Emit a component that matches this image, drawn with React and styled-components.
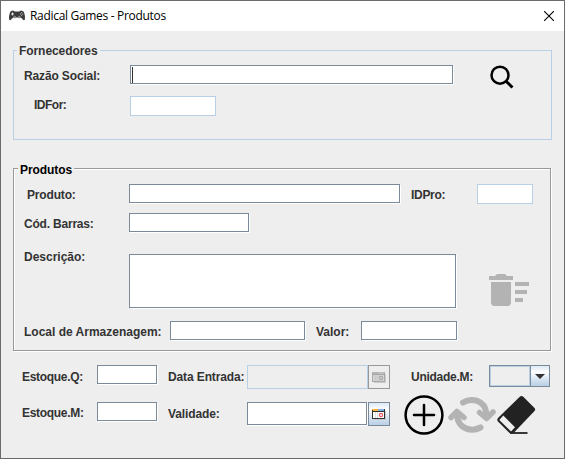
import React from "react";
import styled, { createGlobalStyle } from "styled-components";

const Global = createGlobalStyle`
  * { box-sizing: border-box; }
  body { margin: 0; background: #eeeeee; }
`;
const Window = styled.main`
  width: 565px;
  height: 459px;
  border: 1px solid #6b6b6b;
  background: #eeeeee;
  color: #333333;
  font: bold 12px/14px "Liberation Sans", Arial, sans-serif;
  overflow: hidden;
`;
const TitleBar = styled.header`
  display: flex;
  align-items: center;
  height: 30px;
  padding: 0 10px 0 7px;
  background: #ffffff;
  color: #000000;
`;
const Title = styled.h1`
  flex: 1;
  margin: 0 0 0 4px;
  font: 12px/16px "Open Sans", "Noto Sans", sans-serif;
  letter-spacing: -0.31px;
`;
const Icon = styled.svg`
  display: block;
  flex: none;
  margin: ${(p) => p.$top || 0}px 0 0 ${(p) => p.$gap || 0}px;
`;
const Body = styled.form`
  display: flex;
  flex-direction: column;
  padding: 12px 12px 0;
`;
const Panel = styled.section`
  display: flex;
  flex-direction: column;
  width: 539px;
  height: 90px;
  margin-top: 7px;
  border: 1px solid #b8cfe5;
`;
const EtchedPanel = styled(Panel)`
  width: 538px;
  height: 183px;
  margin-top: 28px;
  border-color: #999999;
  box-shadow: 1px 1px 0 #ffffff, inset 1px 1px 0 #ffffff;
`;
const Legend = styled.h2`
  align-self: flex-start;
  height: 14px;
  margin: -7px 0 0 ${(p) => p.$inset}px;
  padding: ${(p) => p.$drop || 0}px 2px 0;
  background: #eeeeee;
  color: ${(p) => p.$color};
  font: inherit;
  white-space: nowrap;
  letter-spacing: -0.07px;
`;
const Row = styled.div`
  display: flex;
  align-items: flex-start;
  height: ${(p) => p.$height}px;
`;
const Label = styled.label`
  flex: none;
  width: ${(p) => p.$width}px;
  margin: ${(p) => p.$top || 0}px 0 0 ${(p) => p.$gap || 0}px;
  white-space: nowrap;
  letter-spacing: ${(p) => p.$spacing || 0}px;
`;
const Field = styled.div`
  flex: none;
  width: ${(p) => p.$width}px;
  height: ${(p) => p.$height || 19}px;
  margin: ${(p) => p.$top || 0}px 0 0 ${(p) => p.$gap || 0}px;
  padding: 1px;
  border: 1px solid #7a8a99;
  background: #ffffff;
  box-shadow: 1px 1px 0 #ffffff;
`;
const SoftField = styled(Field)`
  border-color: #b8cfe5;
  background: ${(p) => (p.$disabled ? "#eeeeee" : "#ffffff")};
  box-shadow: none;
`;
const Caret = styled.div`
  width: 1px;
  height: 16px;
  background: #333333;
`;
const DateButton = styled.button`
  display: flex;
  flex: none;
  align-items: flex-start;
  justify-content: center;
  width: 22px;
  height: 24px;
  margin-left: ${(p) => p.$gap || 0}px;
  padding: 6px 0 0;
  border: 1px solid ${(p) => (p.disabled ? "#999999" : "#7a8a99")};
  background: ${(p) => (p.disabled ? "#eeeeee" : "linear-gradient(#dde8f3 0%, #ffffff 30%, #dde8f3 60%, #b8cfe5 100%)")};
`;
const Combo = styled.div`
  display: flex;
  flex: none;
  width: 61px;
  height: 22px;
  border: 1px solid #7a8a99;
`;
const ComboValue = styled.div`
  flex: 1;
  border: 1px solid #b8cfe5;
`;
const ComboArrow = styled.div`
  display: flex;
  align-items: center;
  justify-content: center;
  width: 19px;
  border-left: 1px solid #7a8a99;
  background: linear-gradient(#dde8f3 0%, #ffffff 30%, #dde8f3 60%, #b8cfe5 100%);
`;
const Stock = styled.section`
  display: flex;
  height: 94px;
  margin-top: 14px;
`;
const StockFields = styled.div`
  width: 377px;
`;
const Actions = styled.div`
  display: flex;
  flex-direction: column;
`;

const Gamepad = () => (
  <Icon width="18" height="14" viewBox="0 0 18 14">
    <path d="M3.500 2Q5.500 1 6.500 2.500H11.500Q12.500 1 14.500 2Q16 2 16.500 5Q17.500 9 16.800 10.700Q15.500 12 14 9.500L12.500 8.500H5.500L4 9.500Q2.500 12 1.200 10.700Q.5 9 1.500 5Q2 2 3.500 2Z" fill="#3b3b3b" />
    <path d="M3 5h3M4.500 3.500v3M12.200 5h.8M14.400 5h.8M13.300 3.700h.8M13.300 6.300h.8" stroke="#e4e4e4" strokeWidth="1" />
    <circle cx="6.700" cy="8" r="1.300" fill="#8a8a8a" />
    <circle cx="11.300" cy="8" r="1.300" fill="#8a8a8a" />
  </Icon>
);
const Calendar = ({ off }) => (
  <svg width="14" height="11" viewBox="0 0 14 11" shapeRendering="crispEdges">
    <path d="M2 2h12v9H2z" fill={off ? "#cccccc" : "#c3c8cf"} />
    <path d="M0 0h13v10H0z" fill={off ? "#aaaaaa" : "#333333"} />
    <path d="M1 2h11v7H1z" fill={off ? "#d4d4d4" : "#ffffff"} />
    <path d="M0 0h6v1H0zM1 1h5v1H1z" fill={off ? "#b4b4b4" : "#ffb43c"} />
    <path d="M6 0h6v1H6zM6 1h6v1H6z" fill={off ? "#bebebe" : "#7fb0ea"} />
    <path d="M1 2h11v1H1z" fill={off ? "#aaaaaa" : "#333333"} />
    <path d="M3 3h1v6H3zM5 3h1v6H5z" fill={off ? "#c8c8c8" : "#e0e0e0"} />
    <circle cx="9" cy="6" r="1.600" fill="none" stroke={off ? "#aaaaaa" : "#e85762"} strokeWidth="1.200" shapeRendering="auto" />
  </svg>
);

export default function App() {
  return (
    <>
      <Global />
      <Window>
        <TitleBar>
          <Gamepad />
          <Title>Radical Games - Produtos</Title>
          <svg width="10" height="10" viewBox="0 0 10 10"><path d="M0 0L10 10M10 0L0 10" stroke="#000" strokeWidth="1.100" /></svg>
        </TitleBar>
        <Body>
          <Panel>
            <Legend $inset={3} $color="#333333">Fornecedores</Legend>
            <Row $height={31}>
              <Label $gap={10} $top={11} $width={106} $spacing={-0.14}>Razão Social:</Label>
              <Field $width={323} $top={7}><Caret /></Field>
              <Icon $gap={37} $top={7} width="25" height="25" viewBox="0 0 25 25">
                <circle cx="10" cy="10.200" r="8.500" fill="none" stroke="#000" strokeWidth="2.500" />
                <path d="M16 16.200L22.500 22.500" stroke="#000" strokeWidth="2.900" />
              </Icon>
            </Row>
            <Row $height={30}>
              <Label $gap={20} $top={9} $width={96} $spacing={-0.5}>IDFor:</Label>
              <SoftField $width={86} $height={20} $top={7} />
            </Row>
          </Panel>
          <EtchedPanel>
            <Legend $inset={4} $drop={1} $color="#000000">Produtos</Legend>
            <Row $height={29}>
              <Label $gap={13} $top={12} $width={102} $spacing={-0.17}>Produto:</Label>
              <Field $width={271} $top={8} />
              <Label $gap={11} $top={12} $width={66} $spacing={-0.3}>IDPro:</Label>
              <SoftField $width={56} $height={20} $top={8} />
            </Row>
            <Row $height={41}>
              <Label $gap={10} $top={12} $width={105} $spacing={-0.2}>Cód. Barras:</Label>
              <Field $width={120} $top={8} />
            </Row>
            <Row $height={67}>
              <Label $gap={10} $top={4} $width={105}>Descrição:</Label>
              <Field $width={327} $height={54} $top={8} />
              <Icon $gap={33} $top={27} width="40" height="34" viewBox="0 0 40 34">
                <path d="M0 3H6L8 1H16L18 3H24V7H0ZM2 9H22V29.500Q22 33 18 33H6Q2 33 2 29.500ZM26 9h14v4H26zM26 17h12v4H26zM26 25h8v4h-8z" fill="#b3b3b3" />
              </Icon>
            </Row>
            <Row $height={30}>
              <Label $gap={10} $top={12} $width={146}>Local de Armazenagem:</Label>
              <Field $width={135} $top={8} />
              <Label $gap={11} $top={12} $width={45}>Valor:</Label>
              <Field $width={96} $top={8} />
            </Row>
          </EtchedPanel>
          <Stock>
            <StockFields>
              <Row $height={37}>
                <Label $gap={9} $top={5} $width={75} $spacing={-0.3}>Estoque.Q:</Label>
                <Field $width={60} />
                <Label $gap={11} $top={5} $width={79} $spacing={-0.12}>Data Entrada:</Label>
                <SoftField $disabled $width={121} $height={24} />
                <DateButton type="button" disabled><Calendar off /></DateButton>
              </Row>
              <Row $height={37}>
                <Label $gap={9} $top={4} $width={75} $spacing={-0.3}>Estoque.M:</Label>
                <Field $width={60} />
                <Label $gap={11} $top={5} $width={79} $spacing={-0.12}>Validade:</Label>
                <Field $width={120} $height={23} />
                <DateButton type="button" $gap={1}><Calendar /></DateButton>
              </Row>
            </StockFields>
            <Actions>
              <Row $height={29}>
                <Label $gap={21} $top={5} $width={78} $spacing={-0.28}>Unidade.M:</Label>
                <Combo>
                  <ComboValue />
                  <ComboArrow><svg width="10" height="5" viewBox="0 0 10 5"><path d="M0 0H10L5 5Z" fill="#333" /></svg></ComboArrow>
                </Combo>
              </Row>
              <Row $height={44}>
                <Icon $gap={14} $top={1} width="40" height="40" viewBox="0 0 40 40">
                  <circle cx="20" cy="20" r="18.400" fill="none" stroke="#000" strokeWidth="2.500" />
                  <path d="M20 10V30M10 20H30" stroke="#000" strokeWidth="2.500" strokeLinecap="round" />
                </Icon>
                <Icon $gap={4} $top={2} width="48" height="38" viewBox="0 0 48 38" fill="none" stroke="#b3b3b3" strokeWidth="6" strokeLinecap="round" strokeLinejoin="round">
                  <path d="M15 6.500C23 1.500 37 3.500 38.500 18" />
                  <path d="M32.500 31.500C24 36 10 33.500 9 19" />
                  <path d="M31.500 16.500L38.500 22.500L45 16" fill="#b3b3b3" strokeWidth="5.500" />
                  <path d="M3 21.500L9 15.500L16 21.500" fill="#b3b3b3" strokeWidth="5.500" />
                </Icon>
                <Icon $gap={1} $top={1} width="39" height="40" viewBox="0 0 39 40">
                  <path d="M22.500 2Q24.500 .2 26.500 2L37.500 13Q38.800 14.500 37.500 16L17.500 37Q15.500 39 12.500 38L1 26.500Q-.5 25 1 23Z" fill="#222" />
                  <path d="M6.300 20.500L18 32.200L14 36.500L2.300 25Z" fill="#eee" />
                  <path d="M13 38H30.500" stroke="#222" strokeWidth="1.800" />
                </Icon>
              </Row>
            </Actions>
          </Stock>
        </Body>
      </Window>
    </>
  );
}
